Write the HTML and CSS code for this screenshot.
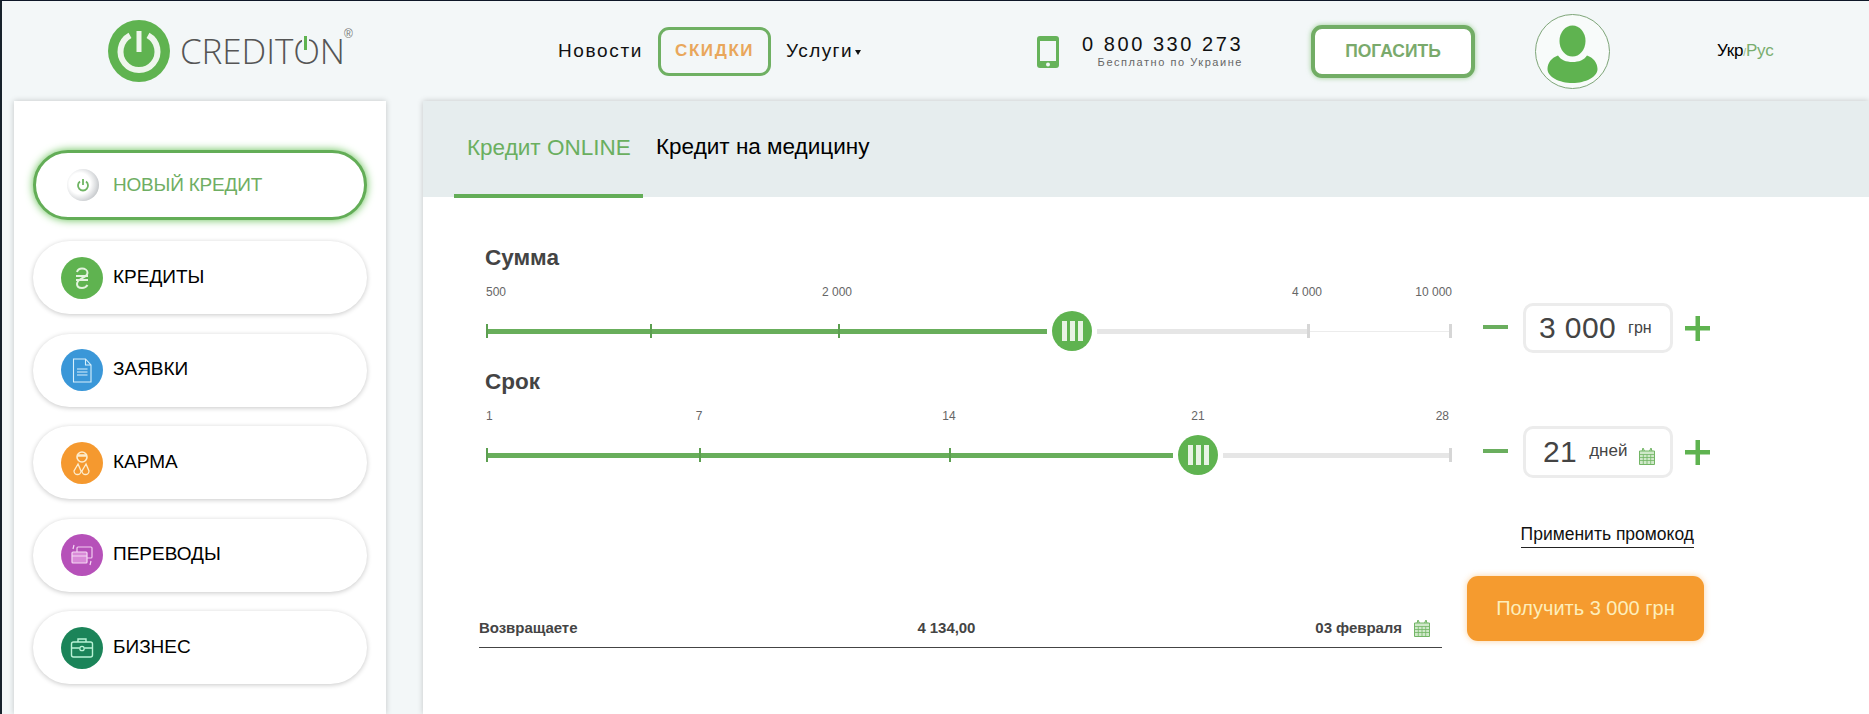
FILE: index.html
```html
<!DOCTYPE html>
<html lang="ru">
<head>
<meta charset="utf-8">
<title>Crediton</title>
<link rel="stylesheet" href="styles.css">
</head>
<body>
<div class="page">
  <header class="header">
    <div class="logo">
      <svg class="logo-mark" viewBox="0 0 62 62"><circle cx="31" cy="31" r="31" fill="#5fb350"/><path d="M22 15.400A18.500 18.500 0 1 0 40 15.400" fill="none" stroke="#eef6ec" stroke-width="6"/><rect x="28.500" y="11" width="5" height="21" fill="#eef6ec"/></svg>
      <span class="logo-text">CREDIT<span class="logo-o">O</span>N</span>
      <span class="logo-reg">®</span>
    </div>
    <nav class="nav">
      <a class="nav-link">Новости</a>
      <a class="nav-sale">СКИДКИ</a>
      <a class="nav-link nav-menu">Услуги<span class="caret"></span></a>
    </nav>
    <div class="phone">
      <svg class="phone-icon" viewBox="0 0 22 32"><rect width="22" height="32" rx="3" fill="#66b35a"/><rect x="3" y="5" width="16" height="20" fill="#f3f7f8"/><circle cx="11" cy="28.500" r="2" fill="#f3f7f8"/></svg>
      <div class="phone-text">
        <div class="phone-num">0 800 330 273</div>
        <div class="phone-sub">Бесплатно по Украине</div>
      </div>
    </div>
    <a class="pay">ПОГАСИТЬ</a>
    <div class="avatar">
      <svg viewBox="0 0 75 75"><circle cx="37.500" cy="37.500" r="37" fill="#f8fbfa" stroke="#7ea578" stroke-width="1"/><ellipse cx="37.500" cy="27" rx="13" ry="15.500" fill="#5fb350"/><path d="M23 41.500c3 4.500 8 6.500 14.500 6.500S49 46 52 41.500c6 2 10.500 7 10.500 13.500 0 8-12 14-25 14S12.500 63 12.500 55c0-6.500 4.500-11.500 10.500-13.500z" fill="#5fb350"/></svg>
    </div>
    <div class="lang"><span class="lang-ua">Укр</span><span class="lang-sep">/</span><span class="lang-ru">Рус</span></div>
  </header>

  <div class="layout">
    <aside class="sidebar">
      <a class="pill pill-active">
        <span class="ball"><svg viewBox="0 0 16 16" width="16" height="16"><path d="M5 4.500a5 5 0 1 0 6 0" fill="none" stroke="#6fb463" stroke-width="1.800"/><rect x="7.100" y="2" width="1.800" height="6" fill="#6fb463"/></svg></span>
        <span class="pill-label">НОВЫЙ КРЕДИТ</span>
      </a>
      <a class="pill">
        <span class="ico ico-green"><svg viewBox="0 0 42 42"><path d="M16 15c.8-2.500 2.700-3.500 5-3.500 3 0 5.500 1.800 5.500 4.200 0 3.300-3.500 4.300-6 5.800s-4.500 2.800-4.500 5.500c0 2.500 2.200 4 5 4 2.500 0 4.300-1 5.500-3M15 19h12M15 23h12" fill="none" stroke="#e3f3de" stroke-width="2"/></svg></span>
        <span class="pill-label">КРЕДИТЫ</span>
      </a>
      <a class="pill">
        <span class="ico ico-blue"><svg viewBox="0 0 42 42"><path d="M12.500 10h12l5.500 6v17h-17.500zM24.500 10v6h5.500M16 20h10.500M16 23h10.500M16 26h10.500" fill="none" stroke="#d8f0fb" stroke-width="1.100"/></svg></span>
        <span class="pill-label">ЗАЯВКИ</span>
      </a>
      <a class="pill">
        <span class="ico ico-orange"><svg viewBox="0 0 42 42"><circle cx="21" cy="15" r="5" fill="none" stroke="#fdeccb" stroke-width="1.600"/><path d="M16 13.500h10" stroke="#fdeccb" stroke-width="2.500"/><path d="M17 22l-4 7a3.500 3.500 0 0 0 7 0l-3-7zM25 22l-4 7a3.500 3.500 0 0 0 7 0l-3-7z" fill="none" stroke="#fdeccb" stroke-width="1.300"/></svg></span>
        <span class="pill-label">КАРМА</span>
      </a>
      <a class="pill">
        <span class="ico ico-purple"><svg viewBox="0 0 42 42"><rect x="16" y="13" width="15" height="11" rx="1" fill="none" stroke="#f1cdf0" stroke-width="1.200"/><rect x="11" y="18" width="15" height="11" rx="1" fill="#d98bd8" stroke="#f5d9f4" stroke-width="1.200"/><path d="M11 22h15M13 11l-1 4M30 27l-1 4" stroke="#f5d9f4" stroke-width="1.200" fill="none"/></svg></span>
        <span class="pill-label">ПЕРЕВОДЫ</span>
      </a>
      <a class="pill">
        <span class="ico ico-teal"><svg viewBox="0 0 42 42"><rect x="10.500" y="15" width="21" height="15" rx="2" fill="none" stroke="#b9f3d6" stroke-width="1.400"/><path d="M17 15v-3h8v3M10.500 21h8M23.500 21h8" fill="none" stroke="#b9f3d6" stroke-width="1.400"/><circle cx="21" cy="21.500" r="2.200" fill="none" stroke="#b9f3d6" stroke-width="1.300"/></svg></span>
        <span class="pill-label">БИЗНЕС</span>
      </a>
    </aside>

    <main class="main">
      <div class="tabs">
        <a class="tab tab-active">Кредит ONLINE</a>
        <a class="tab">Кредит на медицину</a>
      </div>
      <div class="content">
        <section class="row">
          <div class="slider">
            <h2 class="slider-title">Сумма</h2>
            <div class="scale">
              <span class="mark">500</span>
              <span class="mark mark-c" style="left:351px">2 000</span>
              <span class="mark mark-c" style="left:821px">4 000</span>
              <span class="mark mark-r" style="left:966px">10 000</span>
            </div>
            <div class="track">
              <span class="seg seg-on seg-sum"></span>
              <span class="thumb"><i></i><i></i><i></i></span>
              <span class="seg seg-off seg-sum-off"></span>
              <span class="seg seg-thin"></span>
              <span class="tick tick-on" style="left:0"></span>
              <span class="tick tick-on" style="left:164px"></span>
              <span class="tick tick-on" style="left:352px"></span>
              <span class="tick tick-off" style="left:821px"></span>
              <span class="tick tick-off" style="left:963px"></span>
            </div>
          </div>
          <div class="stepper">
            <svg class="step-btn" viewBox="0 0 25 25"><rect y="9" width="25" height="4" fill="#6aae5e"/></svg>
            <div class="step-box"><span class="step-val">3 000</span><span class="step-unit">грн</span></div>
            <svg class="step-btn" viewBox="0 0 25 25"><rect y="10" width="25" height="4.500" fill="#5fb350"/><rect x="10.500" width="4.500" height="25" fill="#5fb350"/></svg>
          </div>
        </section>
        <section class="row">
          <div class="slider">
            <h2 class="slider-title">Срок</h2>
            <div class="scale">
              <span class="mark">1</span>
              <span class="mark mark-c" style="left:213px">7</span>
              <span class="mark mark-c" style="left:463px">14</span>
              <span class="mark mark-c" style="left:712px">21</span>
              <span class="mark mark-r" style="left:963px">28</span>
            </div>
            <div class="track">
              <span class="seg seg-on seg-term"></span>
              <span class="thumb"><i></i><i></i><i></i></span>
              <span class="seg seg-off seg-term-off"></span>
              <span class="tick tick-on" style="left:0"></span>
              <span class="tick tick-on" style="left:213px"></span>
              <span class="tick tick-on" style="left:463px"></span>
              <span class="tick tick-off" style="left:963px"></span>
            </div>
          </div>
          <div class="stepper">
            <svg class="step-btn" viewBox="0 0 25 25"><rect y="9" width="25" height="4" fill="#6aae5e"/></svg>
            <div class="step-box step-box-tall"><span class="step-val">21</span><span class="step-unit step-unit-days">дней</span>
              <svg class="cal cal-inbox" viewBox="0 0 16 18"><use href="#cal"/></svg>
            </div>
            <svg class="step-btn" viewBox="0 0 25 25"><rect y="10" width="25" height="4.500" fill="#5fb350"/><rect x="10.500" width="4.500" height="25" fill="#5fb350"/></svg>
          </div>
        </section>
        <section class="bottom">
          <div class="summary">
            <span>Возвращаете</span>
            <span>4 134,00</span>
            <span class="summary-date">03 февраля
              <svg class="cal" viewBox="0 0 16 18"><use href="#cal"/></svg>
            </span>
          </div>
          <div class="actions">
            <a class="promo">Применить промокод</a>
            <a class="cta">Получить 3 000 грн</a>
          </div>
        </section>
      </div>
    </main>
  </div>
</div>
<svg class="defs" width="0" height="0"><defs><g id="cal"><path d="M0.500 4h15v13.500h-15zM3 4l1-3 1.500 3M10.500 4l1.500-3 1 3" fill="#cfe8c9" stroke="#72b565" stroke-width="1"/><path d="M0.500 7.500h15M0.500 10.500h15M0.500 13.500h15M4.300 7.500v10M8 7.500v10M11.700 7.500v10" fill="none" stroke="#72b565" stroke-width="0.800"/></g></defs></svg>
</body>
</html>
```
FILE: styles.css
```css
* { box-sizing: border-box; }
html, body { margin: 0; height: 100%; overflow: hidden; }
body { font-family: "Liberation Sans", Arial, sans-serif; background: #f3f7f8; color: #000; }
a { color: inherit; text-decoration: none; }
.defs { position: absolute; }

.page { height: 714px; border-top: 1px solid #0e1728; border-left: 2px solid #17222c; display: flex; flex-direction: column; }

.header { height: 100px; flex: none; display: flex; align-items: center; padding-left: 106px; }
.logo { width: 450px; flex: none; display: flex; align-items: center; position: relative; }
.logo-mark { width: 62px; height: 62px; flex: none; }
.logo-text { margin-left: 10px; font-family: "Open Sans", sans-serif; font-weight: 300; font-size: 35px; letter-spacing: -0.100px; color: #555; line-height: 40px; }
.logo-o { position: relative; display: inline-block; }
.logo-o::after { content: ""; position: absolute; left: 50%; top: 5px; width: 3px; height: 14px; margin-left: -2px; background: #5fb350; box-shadow: 0 0 0 2px #f3f7f8; }
.logo-reg { position: absolute; left: 236px; top: 7px; font-size: 12px; color: #777; }

.nav { display: flex; align-items: center; width: 307px; flex: none; }
.nav-link { font-size: 19px; letter-spacing: 1.650px; color: #111; }
.nav-sale { margin: 0 15px 0 15px; width: 113px; height: 49px; flex: none; border: 3px solid #6fb063; border-radius: 11px; display: flex; align-items: center; justify-content: center; font-size: 17px; font-weight: 700; letter-spacing: 1.600px; color: #e9a75c; }
.nav-menu { display: flex; align-items: center; letter-spacing: 1.400px; }
.caret { margin-left: 2px; margin-top: 2px; border-left: 3.500px solid transparent; border-right: 3.500px solid transparent; border-top: 5px solid #111; }

.phone { display: flex; align-items: center; margin-left: 172px; flex: none; }
.phone-icon { width: 22px; height: 32px; flex: none; margin-top: 1px; }
.phone-text { margin-left: 23px; width: 161px; text-align: right; }
.phone-num { font-size: 20px; letter-spacing: 2.550px; line-height: 22px; color: #111; white-space: nowrap; }
.phone-sub { font-size: 11px; letter-spacing: 1.550px; color: #666; line-height: 14px; white-space: nowrap; }

.pay { margin-left: 68px; width: 164px; height: 53px; flex: none; border: 4px solid #72ad65; border-radius: 11px; background: #fff; box-shadow: 0 0 5px rgba(95,179,80,.6); display: flex; align-items: center; justify-content: center; font-size: 17.500px; font-weight: 700; color: #7aaa6c; }
.avatar { margin-left: 60px; width: 75px; height: 75px; flex: none; }
.avatar svg { display: block; width: 75px; height: 75px; }
.lang { margin-left: 107px; font-size: 17px; letter-spacing: -0.200px; white-space: nowrap; }
.lang-sep { font-size: 10px; color: #88b57f; }
.lang-ru { color: #79ad6e; }

.layout { flex: 1; min-height: 0; display: flex; padding-left: 12px; gap: 37px; }
.sidebar { width: 372px; flex: none; background: #fff; box-shadow: 0 0 6px rgba(0,0,0,.2); padding: 49px 19px 0; display: flex; flex-direction: column; gap: 19.500px; }
.pill { height: 73px; flex: none; border-radius: 37px; background: #fff; box-shadow: 0 1px 5px rgba(0,0,0,.22); display: flex; align-items: center; padding-left: 28px; font-size: 19px; color: #000; }
.pill-label { margin-top: -2px; }
.pill-active { height: 70px; margin-bottom: 1.500px; border: 3px solid #63ad57; box-shadow: 0 0 8px #63c052; padding-left: 31px; color: #6fae63; letter-spacing: -0.200px; }
.pill-active .pill-label { margin-top: 0; }
.ball { width: 32px; height: 32px; margin-right: 14px; border-radius: 50%; flex: none; background: radial-gradient(circle at 40% 45%, #fff 0 40%, #dcdee0 62%, #9a9ea3 100%); display: flex; align-items: center; justify-content: center; }
.ico { width: 42px; height: 42px; margin-right: 10px; border-radius: 50%; flex: none; }
.ico svg { display: block; width: 42px; height: 42px; }
.ico-green { background: #5fb350; }
.ico-blue { background: #3a97d8; }
.ico-orange { background: #f5992f; }
.ico-purple { background: #b651b9; }
.ico-teal { background: #1b8459; }

.main { flex: 1; min-width: 0; background: #fff; box-shadow: 0 0 6px rgba(0,0,0,.2); }
.tabs { height: 96px; background: #e6edee; display: flex; padding-left: 31px; }
.tab { height: 96px; padding: 0 13px 4px; display: flex; align-items: center; font-size: 22.500px; color: #000; }
.tab-active { width: 189px; flex: none; white-space: nowrap; color: #6aaf5f; border-bottom: 4px solid #63ad57; padding-bottom: 0; margin-bottom: -1px; height: 97px; }

.content { padding: 48px 0 0 63px; }
.row { height: 124px; display: flex; }
.slider { width: 964px; flex: none; }
.slider-title { margin: 0 0 0 -1px; height: 26px; font-size: 22.500px; line-height: 26px; font-weight: 700; color: #444; }
.scale { position: relative; height: 14px; margin-top: 14px; font-size: 12px; line-height: 14px; color: #666; }
.mark { position: absolute; left: 0; top: 0; white-space: nowrap; }
.mark-c { transform: translateX(-50%); }
.mark-r { transform: translateX(-100%); }
.track { position: relative; height: 40px; margin-top: 12px; display: flex; align-items: center; padding-left: 1px; }
.seg { height: 5px; flex: none; }
.seg-on { background: #68ae5b; }
.seg-off { background: #e6e6e6; }
.seg-thin { height: 1px; background: #ececec; width: 142px; }
.seg-sum { width: 560px; }
.seg-sum-off { width: 211px; }
.seg-term { width: 686px; }
.seg-term-off { width: 227px; }
.thumb { width: 40px; height: 40px; margin: 0 5px; flex: none; border-radius: 50%; background: #5fb350; display: flex; align-items: center; justify-content: center; gap: 3px; }
.thumb i { width: 5px; height: 20px; background: #e8f3e4; }
.tick { position: absolute; top: 13px; width: 2px; height: 14px; }
.tick-on { background: #5c9f50; }
.tick-off { background: #d6d6d6; width: 3px; }

.stepper { margin: 58px 0 0 33px; display: flex; align-items: center; height: 50px; }
.step-btn { width: 25px; height: 25px; flex: none; }
.step-box { width: 150px; height: 50px; margin: 0 12px 0 15px; border: 3px solid #ececec; border-radius: 10px; background: #fff; display: flex; align-items: center; padding-left: 13px; color: #444; position: relative; }
.step-box-tall { height: 52px; padding-left: 17px; }
.step-val { font-size: 30px; letter-spacing: 0.400px; }
.step-unit { font-size: 16px; margin-left: 12px; }
.step-unit-days { font-size: 17px; margin-left: 12px; margin-top: -3px; }
.cal { width: 16px; height: 18px; flex: none; }
.cal-inbox { margin-left: 12px; margin-top: 7px; }

.bottom { display: flex; margin-left: -7px; }
.summary { width: 963px; flex: none; height: 32px; margin-top: 123px; padding-bottom: 8px; border-bottom: 1px solid #444; display: flex; justify-content: space-between; align-items: center; font-size: 15px; font-weight: 700; color: #444; letter-spacing: -0.050px; }
.summary-date { display: flex; align-items: center; gap: 12px; margin-right: 12px; }
.actions { width: 237px; margin-left: 25px; padding-top: 32px; display: flex; flex-direction: column; align-items: flex-end; }
.promo { margin-right: 10px; font-size: 17.500px; line-height: 18px; padding-bottom: 4px; border-bottom: 1px solid #222; color: #111; white-space: nowrap; }
.cta { margin-top: 28px; width: 237px; height: 65px; border-radius: 11px; background: #f59b2f; box-shadow: 0 0 6px rgba(245,155,47,.45); display: flex; align-items: center; justify-content: center; font-size: 20px; color: #fdeebb; }
```
